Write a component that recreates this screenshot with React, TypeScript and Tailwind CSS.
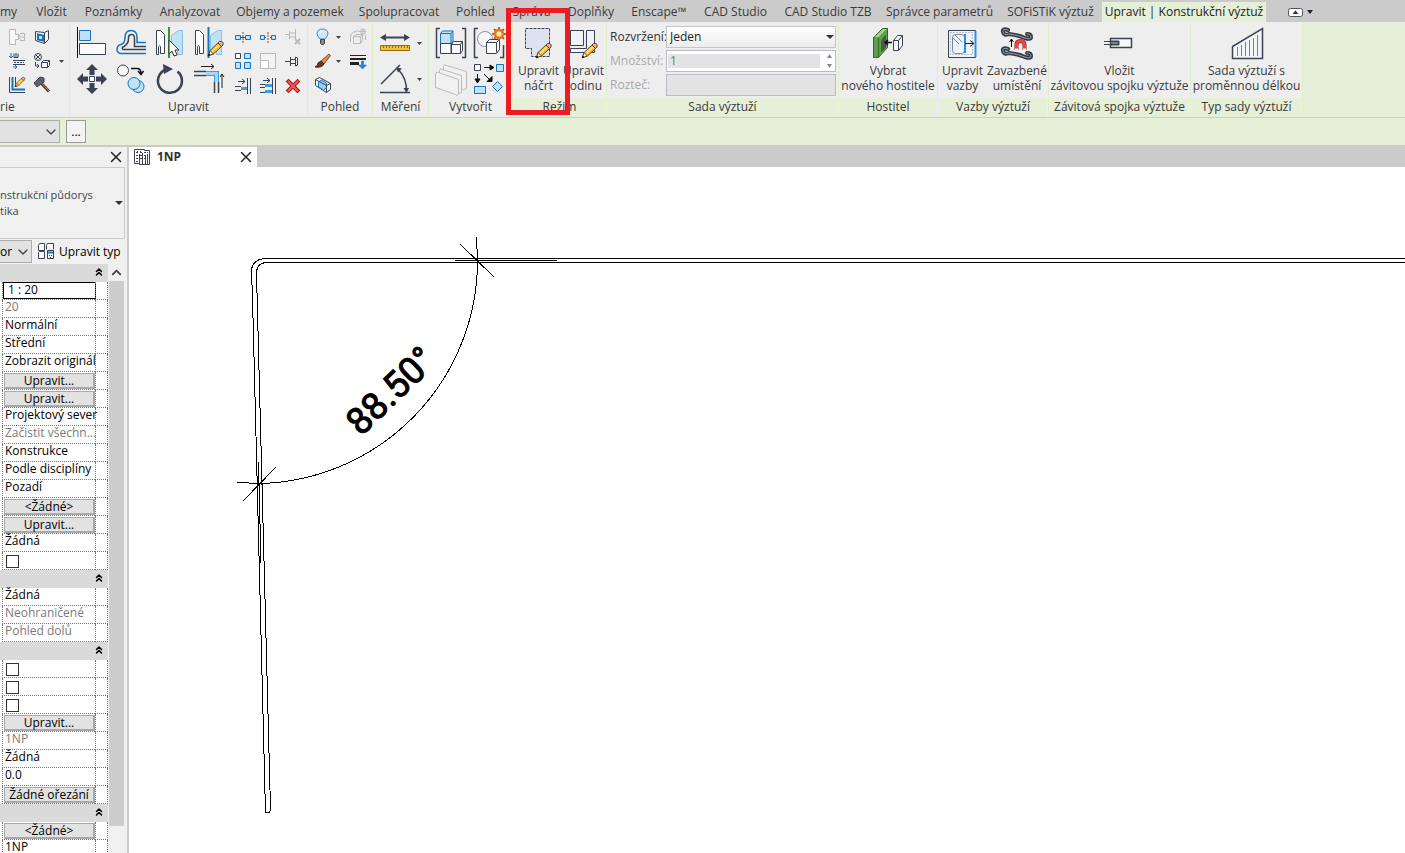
import React from "react";
import { ChevronDown, ChevronUp, ChevronsUp, X } from "lucide-react";

const DARK = "#3b4352";
const BLUE = "#1673c4";
const SKY = "#bfe2f7";
const OFF = "#b9b9b9";

const tabs = [
  { name: "my", width: "w-[27px]" },
  { name: "Vložit", width: "w-[49px]" },
  { name: "Poznámky", width: "w-[75px]" },
  { name: "Analyzovat", width: "w-[78px]" },
  { name: "Objemy a pozemek", width: "w-[122px]" },
  { name: "Spolupracovat", width: "w-[96px]" },
  { name: "Pohled", width: "w-[57px]" },
  { name: "Správa", width: "w-[55px]" },
  { name: "Doplňky", width: "w-[64px]" },
  { name: "Enscape™", width: "w-[72px]" },
  { name: "CAD Studio", width: "w-[81px]" },
  { name: "CAD Studio TZB", width: "w-[104px]" },
  { name: "Správce parametrů", width: "w-[119px]" },
  { name: "SOFiSTiK výztuž", width: "w-[103px]" },
];

type Row = { kind: "text" | "muted" | "edit" | "button" | "check" | "group"; value: string };

const rows: Row[] = [
  { kind: "group", value: "" },
  { kind: "edit", value: "1 : 20" },
  { kind: "muted", value: "20" },
  { kind: "text", value: "Normální" },
  { kind: "text", value: "Střední" },
  { kind: "text", value: "Zobrazit originál" },
  { kind: "button", value: "Upravit..." },
  { kind: "button", value: "Upravit..." },
  { kind: "text", value: "Projektový sever" },
  { kind: "muted", value: "Začistit všechn..." },
  { kind: "text", value: "Konstrukce" },
  { kind: "text", value: "Podle disciplíny" },
  { kind: "text", value: "Pozadí" },
  { kind: "button", value: "<Žádné>" },
  { kind: "button", value: "Upravit..." },
  { kind: "text", value: "Žádná" },
  { kind: "check", value: "" },
  { kind: "group", value: "" },
  { kind: "text", value: "Žádná" },
  { kind: "muted", value: "Neohraničené" },
  { kind: "muted", value: "Pohled dolů" },
  { kind: "group", value: "" },
  { kind: "check", value: "" },
  { kind: "check", value: "" },
  { kind: "check", value: "" },
  { kind: "button", value: "Upravit..." },
  { kind: "muted", value: "1NP" },
  { kind: "text", value: "Žádná" },
  { kind: "text", value: "0.0" },
  { kind: "button", value: "Žádné ořezání" },
  { kind: "group", value: "" },
  { kind: "button", value: "<Žádné>" },
  { kind: "text", value: "1NP" },
];

function Small({ label, children }: { label: string; children: React.ReactNode }) {
  return (
    <button aria-label={label} className="block h-4 w-4 shrink-0">
      <svg width="16" height="16" viewBox="0 0 16 16" fill="none" stroke={DARK} className="overflow-visible">
        {children}
      </svg>
    </button>
  );
}

function Big({ label, children }: { label: string; children: React.ReactNode }) {
  return (
    <button aria-label={label} className="block h-[30px] w-[30px] shrink-0">
      <svg width="30" height="30" viewBox="0 0 30 30" fill="none" stroke={DARK} className="overflow-visible">
        {children}
      </svg>
    </button>
  );
}

function Caret({ label }: { label: string }) {
  return (
    <button aria-label={label} className="flex h-4 w-[5px] shrink-0 items-center">
      <svg width="5" height="3" viewBox="0 0 5 3">
        <path d="M0 0h5L2.500 3z" fill="#444" />
      </svg>
    </button>
  );
}

function Pencil({ x, y }: { x: number; y: number }) {
  return (
    <g transform={`translate(${x} ${y})`} strokeWidth="1">
      <path d="M.5 14.500l1.500-5L10 2l3.500 3.500-8 7.500z" fill="#f7bb2c" stroke="#6b4a14" />
      <path d="M2 9.500L5.500 13l-5 1.500z" fill="#fdf0d8" stroke="#6b4a14" />
      <path d="M10 2l1.500-1.500q2-.5 3 .5t.5 3L13.500 5.500z" fill="#f2b08c" stroke="#4f3a34" />
      <path d="M4 10.500l7-6.500" stroke="#ffe694" strokeWidth="1.500" />
      <path d="M0 15l1-2 1 1z" fill="#222" stroke="#222" />
    </g>
  );
}

type PanelProps = { title: string; width: string; context?: boolean; children: React.ReactNode };

function Panel({ title, width, context, children }: PanelProps) {
  return (
    <section className={`flex shrink-0 flex-col border-r border-[#dff0c8] bg-[#eeeeee] ${width}`}>
      <div className="h-[76px]">{children}</div>
      <h2 className={`mx-px h-[19px] text-center leading-[17px] whitespace-nowrap ${context ? "bg-[#e6efd8]" : ""}`}>
        {title}
      </h2>
    </section>
  );
}

type CommandProps = { lines: [string, string]; children: React.ReactNode };

function Command({ lines, children }: CommandProps) {
  return (
    <button className="flex shrink-0 flex-col items-center leading-[15px] whitespace-nowrap">
      <svg width="32" height="32" viewBox="0 0 32 32" fill="none" stroke={DARK} className="mb-1 overflow-visible">
        {children}
      </svg>
      <span>{lines[0]}</span>
      <span>{lines[1]}</span>
    </button>
  );
}

function GeometryTools() {
  return (
    <div className="flex gap-[9px] pt-[7px] pl-[9px]">
      <div className="flex flex-col gap-2">
        <Small label="Zářez">
          <path d="M.5.500h6v5h3v5h-3v5h-6z" stroke={OFF} fill="#f7f7f7" />
          <path d="M15 8H9m2.500-2.500L9 8l2.500 2.500M11 4.500h4.500v7H11" stroke={OFF} />
        </Small>
        <Small label="Odříznout">
          <path d="M2 0v5M0 3l2 2 2-2M4 14h4l-2-2m2 2l-2 2" stroke={BLUE} />
          <path d="M5 .500v4h4v-4M7 0v4M4 7.500h12M4 11.500h12" />
          <path d="M5 9.500h10" strokeDasharray="2 1" />
        </Small>
        <Small label="Spojení">
          <path d="M.5 0v15.500H16M6.500 0v9.500H8" />
          <path d="M3.500 0v12.500H16" stroke={BLUE} strokeWidth="2" />
          <g transform="translate(6 0) scale(.65)"><Pencil x={0} y={0} /></g>
        </Small>
      </div>
      <div className="flex flex-col gap-2">
        <Small label="Spojit geometrii">
          <path d="M1.500 2.500l9 1 4-2v9l-4 4-9-3z" fill="#f5f7fa" />
          <path d="M10.500 3.500v11" />
          <path d="M4 5.500l5 1v5l-5-1z" fill={SKY} stroke={BLUE} strokeWidth="2" />
        </Small>
        <Small label="Barva">
          <circle cx="4" cy="4" r="3.500" />
          <path d="M1.500 1.500l5 5m0-5l-5 5M1.500 9v4h3m-1.500-2l2 2-2 2" />
          <path d="M7.500 9.500l2-2h6v5l-2 2h-6zM7.500 9.500h6v5m0-5l2-2" fill="#fff" />
        </Small>
        <Small label="Demolice">
          <path d="M0 6l6-6 4 1v4l-3 2-4 3z" fill="#596273" />
          <path d="M7 6l8 8.500" stroke="#5b3529" strokeWidth="3" />
          <path d="M7 5.500l8 8.500" stroke="#c08a72" />
        </Small>
      </div>
      <div className="flex h-16 items-center">
        <Caret label="Další geometrie" />
      </div>
    </div>
  );
}

function ModifyTools() {
  return (
    <div className="flex pt-[5px] pl-[7px]">
      <div className="grid grid-cols-4 gap-x-[9px] gap-y-[7px]">
        <Big label="Zarovnat">
          <path d="M.5 0v31" stroke="#111" />
          <path d="M2.500 3.500h11v10h-11z" fill={SKY} stroke={BLUE} />
          <path d="M2.500 16.500h26v11h-26z" fill="#fbfbfb" />
        </Big>
        <Big label="Odsadit">
          <path d="M30 26.500H5q-4-.5-4-4 0-4 4-5 4-1 4-7 0-7 6-7t6 7v5h9" stroke={BLUE} strokeWidth="1.500" />
          <path d="M30 22.500H7q-2-2 1-3 5-3 4.500-9 0-3 3-3t3 4v8H30" strokeWidth="1.500" />
        </Big>
        <Big label="Zrcadlit - vybrat osu">
          <path d="M1.500 3.500h4l4 4v19h-4v-7q-1-2-2 0v8h-2z" fill="#fff" />
          <path d="M27.500 3.500h-4l-7 5v17h4v-4q1-2 2 0v6h5z" fill={SKY} stroke="#8cbfe0" />
          <path d="M14 0v31" stroke="#35952f" strokeWidth="2" />
          <path d="M14 13v14l3-3 2 5 3-1-2-5h4z" fill="#fff" stroke="#333" />
        </Big>
        <Big label="Zrcadlit - nakreslit osu">
          <path d="M1.500 3.500h4l4 4v19h-4v-7q-1-2-2 0v8h-2z" fill="#fff" />
          <path d="M27.500 3.500h-4l-7 5v17h4v-4q1-2 2 0v6h5z" fill={SKY} stroke="#8cbfe0" />
          <path d="M14.500 0v31" stroke={BLUE} strokeWidth="2" />
          <Pencil x={14} y={14} />
        </Big>
        <Big label="Přesunout">
          <g fill={DARK} stroke="none">
            <path d="M15 0l6 6h-3.500v5h-5V6H9zM15 30l6-6h-3.500v-5h-5v5H9zM0 15l6-6v3.500h5v5H6V21zM30 15l-6-6v3.500h-5v5h5V21z" />
          </g>
          <path d="M12.500 12.500h5v5h-5z" fill="#fff" />
        </Big>
        <Big label="Kopírovat">
          <circle cx="7" cy="6.500" r="5.500" fill="#fafafa" />
          <circle cx="22" cy="22.500" r="6" fill={SKY} stroke={BLUE} />
          <circle cx="18" cy="19.500" r="6" fill={SKY} stroke={BLUE} />
          <path d="M15 4.500h6q4 0 4 5M22 7l3 3.500L27.500 7" stroke="#111" strokeWidth="1.500" />
        </Big>
        <Big label="Otočit">
          <path d="M23.500 6.500A12 12 0 1 1 12 4.500" strokeWidth="2.500" transform="translate(-1 1)" />
          <path d="M8 0l10 5-9 5z" fill={DARK} stroke="none" />
        </Big>
        <Big label="Oříznout">
          <path d="M0 7.500h12M0 11.500h12M20.500 18v11M24.500 18v11" strokeWidth="1.500" />
          <path d="M12 9.500h10.500V18" stroke="#3d9be9" strokeWidth="5" />
          <path d="M12 9.500h10.500V18" stroke="#a6d5fb" strokeWidth="3" />
          <path d="M7 2.500h13M17 0l3 2.500L17 5M28 24V10m-2 3l2-3 2 3" stroke="#222" />
        </Big>
      </div>
      <div className="ml-[11px] grid grid-cols-3 gap-x-[9px] gap-y-2 pt-[2px]">
        <Small label="Rozdělit prvek">
          <path d="M.5 6.500h5v4h-5zM10.500 6.500h5v4h-5z" fill={SKY} stroke={BLUE} />
          <path d="M8 3v11" stroke="#c02a1d" strokeDasharray="2 1" />
          <path d="M5.500 8.500h5" stroke="#c02a1d" />
        </Small>
        <Small label="Rozdělit s mezerou">
          <path d="M.5 6.500h4v4h-4zM11.500 6.500h4v4h-4z" fill={SKY} stroke={BLUE} />
          <path d="M8 3v11" stroke="#c02a1d" strokeDasharray="2 1" />
          <path d="M4 8.500h2m4 0h2" stroke="#c02a1d" />
        </Small>
        <Small label="Uvolnit">
          <path d="M0 5.500h4M4.500 2v8M5 4h5m-5 4h5M10.500 0v11" stroke={OFF} />
          <path d="M10 10l5 5m0-5l-5 5" stroke={OFF} strokeWidth="2" />
        </Small>
        <Small label="Pole">
          <path d="M.5.500h5v5h-5z" fill="#fff" />
          <path d="M9.500.500h6v5h-6zM.5 9.500h5v6h-5zM9.500 9.500h6v6h-6z" fill={SKY} stroke={BLUE} />
        </Small>
        <Small label="Měřítko">
          <path d="M.5.500h15v15H.500z" stroke={OFF} fill="#f3f3f3" />
          <path d="M.5 7.500h8v8h-8z" stroke={OFF} fill="#fff" />
        </Small>
        <Small label="Připnout">
          <path d="M0 8.500h5M5.500 4v9M6 6.500h4m-4 4h4M10.500 4l2 1v7l-2 1z" />
        </Small>
        <Small label="Oříznout jeden prvek">
          <path d="M3 3.500h7M7 1l3 2.500L7 6M0 8.500h6M0 12.500h6M12.500 0v16M15.500 0v16" />
          <path d="M6 10.500h6" stroke="#3d9be9" strokeWidth="3" />
        </Small>
        <Small label="Oříznout více prvků">
          <path d="M3 2.500h7M7 0l3 2.500L7 5M0 6.500h5M0 9.500h5M0 14.500h5M12.500 0v16M15.500 0v16" />
          <path d="M5 7.500h7M5 13.500h7" stroke="#3d9be9" strokeWidth="3" />
        </Small>
        <Small label="Odstranit">
          <path d="M3.500 3.500l9 9m0-9l-9 9" stroke="#a8171b" strokeWidth="4" strokeLinecap="square" />
          <path d="M3.500 3.500l9 9m0-9l-9 9" stroke="#f25555" strokeWidth="2" strokeLinecap="square" />
        </Small>
      </div>
    </div>
  );
}

function ViewTools() {
  return (
    <div className="flex pt-[7px] pl-[7px]">
      <div className="flex flex-col gap-2">
        <Small label="Skrýt">
          <path d="M5 10q-3-3-3-5.500Q2.500 0 7.500 0T13 4.500Q13 7 10 10z" fill="#cfe8fb" stroke="#3c86c5" />
          <path d="M5.500 10.500h4v4l-1 1h-2l-1-1z" fill="#888" stroke="#444" />
          <path d="M5 4q0-2 2-2" stroke="#fff" />
        </Small>
        <Small label="Přepsat grafiku">
          <path d="M6 8l8-7 1.500 1.500L9 11z" fill="#e08b4d" stroke="#8d4a1e" />
          <path d="M0 14q3-1 3-4l3-2 3 3q-2 4-9 3z" fill="#6a3b22" stroke="#3f2414" />
        </Small>
        <Small label="Rámeček výběru">
          <path d="M.5 2.500l4-2 11 6v6l-4 3-11-7z" fill="#f4f6f8" />
          <path d="M3.500 5l3-2 5 3v5l-3 2-5-3z" fill="#9bd0fa" stroke={BLUE} />
          <path d="M.5 2.500l11 6v7m0-7l4-2" />
        </Small>
      </div>
      <div className="mr-[9px] ml-[5px] flex flex-col gap-2">
        <Caret label="Možnosti skrytí" />
        <Caret label="Možnosti grafiky" />
      </div>
      <div className="flex flex-col gap-2">
        <Small label="Posunout">
          <path d="M3.500 7.500h7v7h-7zM3.500 7.500l2-2h7v6l-2 3m0-7l2-2M.5 13V6l4-4M4 3.500q4-3 6-1" stroke={OFF} />
          <circle cx="13" cy="2.500" r="2.500" stroke={OFF} />
          <path d="M13 0v5m-2.500-2.500h5M15.500 6v5" stroke={OFF} />
        </Small>
        <Small label="Síla čar">
          <path d="M0 2.500h16" stroke="#222" />
          <path d="M0 6h16" stroke="#222" strokeWidth="2" />
          <path d="M0 10.500h9" stroke="#222" strokeWidth="3" />
          <path d="M11.500 8h2v4h3L12.500 16l-4-4h3z" fill="#2a86dc" stroke="#1460a8" strokeWidth=".5" />
        </Small>
      </div>
    </div>
  );
}

function MeasureTools() {
  return (
    <div className="flex gap-[7px] pt-[5px] pl-[7px]">
      <div className="flex flex-col gap-[7px]">
        <Big label="Kóta">
          <path d="M2 10.500h26" strokeWidth="2" />
          <path d="M0 10.500L6 7v7zM30 10.500L24 7v7z" fill={DARK} stroke="none" />
          <path d="M.5 18.500h29v5H.500z" fill="#efc23a" stroke="#9a6b16" />
          <path d="M3.500 19v2m3-2v2m3-2v2m3-2v2m3-2v2m3-2v2m3-2v2m3-2v2m3-2v2" stroke="#9a6b16" />
        </Big>
        <Big label="Úhlová kóta">
          <path d="M0 28.500h30M1 20L20 1" strokeWidth="1.500" />
          <path d="M18 5q9 10 8.500 22" strokeWidth="1.500" />
          <path d="M16 3.500l6 1-4 4zM26.500 29l-3-5h5.500z" fill={DARK} stroke="none" />
        </Big>
      </div>
      <div className="flex flex-col gap-5 pt-[8px]">
        <Caret label="Druhy kót" />
        <Caret label="Druhy úhlových kót" />
      </div>
    </div>
  );
}

function CreateTools() {
  return (
    <div className="grid grid-cols-[30px_30px] gap-x-2 gap-y-[7px] pt-[5px] pl-[7px]">
      <Big label="Vytvořit skupinu">
        <path d="M4 1.500H.500v29H4M26 1.500h3.500v29H26" strokeWidth="1.500" />
        <path d="M4.500 6.500l2-2.500H17v10l-2 3H4.500z" fill={SKY} stroke={BLUE} />
        <path d="M4.500 6.500H15v10m0-10l2-2.500" stroke={BLUE} />
        <path d="M4.500 16.500H15v10H4.500zM15.500 17.500l2-3h9v9l-2 3h-9z" fill="#fafafa" />
        <path d="M15.500 17.500h9v9m0-9l2-3" />
      </Big>
      <Big label="Vytvořit podobné">
        <path d="M4 1.500H.500v29H4M26 30.500h3.500V18" strokeWidth="1.500" />
        <circle cx="11" cy="12" r="7.500" fill="#f5f7fa" stroke="#8a93a0" />
        <path d="M12.500 15.500l3-3h10v10l-3 4h-10zM12.500 15.500h10v10m0-10l3-3" fill="#fafafa" />
        <path d="M25 0l1.500 3.500L30 2l-1.500 3.500L32 7l-3.500 1.500L30 12l-3.500-1.500L25 14l-1.500-3.500L20 12l1.500-3.500L18 7l3.500-1.500L20 2l3.500 1.500z" fill="#f08c28" stroke="#b5521b" />
        <circle cx="25" cy="7" r="2.500" fill="#fff2a8" stroke="none" />
      </Big>
      <Big label="Vytvořit sestavu">
        <g fill="#f1f1f1" stroke={OFF}>
          <path d="M7.500 2.500q1-3 3-1l20 6v17l-3 1-20-7z" />
          <path d="M3.500 6.500q1-3 3-1l19 6v17l-3 1-19-7z" />
          <path d="M-.5 9.500q1-2 3-1l20 7v14q0 3-3 1l-20-7z" />
        </g>
      </Big>
      <Big label="Vytvořit díly">
        <path d="M.5.500h6v6h-6z" fill="#fff" />
        <path d="M22.500.500h7v7h-7zM.5 22.500h11v7H.500zM23.500 17.500l5 5-5 5-5-5z" fill={SKY} stroke={BLUE} />
        <path d="M10 3.500h9M16 1l4 2.500L16 6zM3.500 10v8M1 15l2.500 4L6 15zM10 10l7 7M18 12.500v5h-5z" stroke="#111" fill="#111" />
      </Big>
    </div>
  );
}

function SetForm() {
  return (
    <form className="grid grid-cols-[56px_minmax(0,1fr)] items-center gap-y-[2px] pt-[4px] pr-[2px] pl-[3px]">
      <label htmlFor="layout" className="text-[#333]">Rozvržení:</label>
      <div className="relative">
        <select
          id="layout"
          defaultValue="Jeden"
          className="block h-[22px] w-full appearance-none border border-[#c3c5cc] bg-linear-to-b from-white to-[#ececec] pl-[3px] text-[#222]"
        >
          <option>Jeden</option>
        </select>
        <svg width="8" height="4" viewBox="0 0 8 4" className="pointer-events-none absolute top-[9px] right-[2px]">
          <path d="M0 0h8L4 4z" fill="#333" />
        </svg>
      </div>
      <label htmlFor="amount" className="text-[#a9a9a9]">Množství:</label>
      <div className="flex h-[22px] items-center border border-[#b9bcc8] bg-white">
        <input
          id="amount"
          defaultValue="1"
          disabled
          className="mr-[7px] ml-[1px] h-[14px] min-w-0 flex-1 bg-[#e3e3e3] pl-[2px] text-[#777]"
        />
        <div className="mr-[3px] flex flex-col gap-[6px]">
          <svg width="5" height="4" viewBox="0 0 5 4"><path d="M0 4h5L2.500 0z" fill="#888" /></svg>
          <svg width="5" height="4" viewBox="0 0 5 4"><path d="M0 0h5L2.500 4z" fill="#888" /></svg>
        </div>
      </div>
      <label htmlFor="spacing" className="text-[#a9a9a9]">Rozteč:</label>
      <input id="spacing" disabled className="h-[22px] w-full min-w-0 border border-[#b9bcc8] bg-[#e3e3e3]" />
    </form>
  );
}

function Ribbon() {
  return (
    <header className="relative shrink-0 bg-[#e6efd8] text-[#3a3a3a]">
      <nav className="flex h-[22px] items-end overflow-hidden bg-[#cbcbcb] leading-5">
        {tabs.map((tab) => (
          <a
            key={tab.name}
            href="#"
            className={`flex h-5 shrink-0 justify-center whitespace-nowrap ${tab.name === "my" ? "pr-[10px]" : ""} ${tab.width}`}
          >
            {tab.name}
          </a>
        ))}
        <a href="#" className="flex h-5 w-[164px] shrink-0 justify-center bg-[#e6efd8] whitespace-nowrap text-[#1c1c1c]">
          Upravit | Konstrukční výztuž
        </a>
        <button aria-label="Minimalizovat pás karet" className="ml-[22px] flex h-5 items-center gap-1">
          <svg width="15" height="9" viewBox="0 0 15 9">
            <rect x=".5" y=".5" width="14" height="8" rx="2" fill="#fff" stroke="#4b5566" />
            <path d="M4.500 6h6l-3-3.500z" fill="#333" />
          </svg>
          <svg width="6" height="4" viewBox="0 0 6 4"><path d="M0 0h6L3 4z" fill="#222" /></svg>
        </button>
      </nav>
      <div className="flex h-[95px] overflow-hidden">
        <Panel title="" width="w-[70px]">
          <div className="flex h-full flex-col">
            <GeometryTools />
            <span className="mt-[5px] leading-[17px] whitespace-nowrap">rie</span>
          </div>
        </Panel>
        <Panel title="Upravit" width="w-[238px]"><ModifyTools /></Panel>
        <Panel title="Pohled" width="w-[65px]"><ViewTools /></Panel>
        <Panel title="Měření" width="w-[56px]"><MeasureTools /></Panel>
        <Panel title="Vytvořit" width="w-[84px]"><CreateTools /></Panel>
        <Panel title="Režim" width="w-[94px]" context>
          <div className="flex gap-1 pt-[5px] pl-[5px]">
            <Command lines={["Upravit", "náčrt"]}>
              <path d="M3.500 1.500h24v28h-18v-8h-6z" fill="#dde3ee" strokeDasharray="3 1" />
              <Pencil x={14} y={16} />
            </Command>
            <Command lines={["Upravit", "rodinu"]}>
              <path d="M3.500 3.500h13v15h-13zM19.500 3.500h8v22h-24v-4h16z" fill="#f1f3f6" />
              <Pencil x={15} y={16} />
            </Command>
          </div>
        </Panel>
        <Panel title="Sada výztuží" width="w-[232px]" context><SetForm /></Panel>
        <Panel title="Hostitel" width="w-[99px]" context>
          <div className="flex justify-center pt-[5px]">
            <Command lines={["Vybrat", "nového hostitele"]}>
              <path d="M1.500 10.500l9-9h5v19l-9 10h-5z" fill="#5fa04c" stroke="#2f6b25" />
              <path d="M1.500 10.500h5l9-9M6.500 10.500v20" stroke="#2f6b25" />
              <path d="M2 10.500l9-8.500h4l-8.500 8.500z" fill="#a4d48f" stroke="none" />
              <path d="M9.500 13.500l4-5v12l-4 4z" fill="#4a5a4a" stroke="#2f6b25" />
              <path d="M20 15.500h-7m3-2.500l-3 2.500 3 2.500" stroke="#111" strokeWidth="1.500" />
              <path d="M21.500 13.500l4-5h5v10l-4 5h-5zM21.500 13.500h5l4-5m-4 5v10" fill="#f7f8fa" />
            </Command>
          </div>
        </Panel>
        <Panel title="Vazby výztuží" width="w-[111px]" context>
          <div className="flex gap-1 pt-[5px] pl-1">
            <Command lines={["Upravit", "vazby"]}>
              <path d="M2.500 3.500h27v27h-27z" fill="#eef3f9" />
              <path d="M4.500 5.500h22v22h-22z" strokeDasharray="1 2" stroke="#8391a5" />
              <rect x="6.500" y="7.500" width="12" height="19" rx="3" stroke="#7d8797" />
              <path d="M9 8l7 7M7 11l6 6" stroke="#7d8797" />
              <path d="M19 7v19M29.500 4v26" stroke="#2b8ff0" strokeWidth="2" />
              <path d="M19 16.500h8M24 13.500l4 3-4 3" stroke="#222" />
            </Command>
            <Command lines={["Zavazbené", "umístění"]}>
              <g strokeLinecap="round">
                <path d="M7 3Q1 1 2 5t6 2q9 1 16 4 6 2 6-1t-4-3M7 22q-6-2-5 2t6 2q9 1 16 4 6 2 6-1t-4-3" strokeWidth="4" stroke="#323842" />
                <path d="M7 3Q1 1 2 5t6 2q9 1 16 4 6 2 6-1t-4-3M7 22q-6-2-5 2t6 2q9 1 16 4 6 2 6-1t-4-3" stroke="#9aa3ad" />
              </g>
              <path d="M10.500 20v-8m-2 3l2-3 2 3" stroke="#111" />
              <path d="M15.500 23v-5q0-4 4-4t4 4v5" stroke="#8f1f1f" strokeWidth="4" />
              <path d="M15.500 22v-4q0-4 4-4t4 4v4" stroke="#ef4343" strokeWidth="3" />
              <path d="M14 23h3m5 0h3" stroke="#eee" strokeWidth="3" />
            </Command>
          </div>
        </Panel>
        <Panel title="Závitová spojka výztuže" width="w-[142px]" context>
          <div className="flex justify-center pt-[5px]">
            <Command lines={["Vložit", "závitovou spojku výztuže"]}>
              <path d="M1 14.500h7M1 17.500h7" />
              <path d="M7.500 11.500h21v9h-21z" fill="#f7f7f7" strokeWidth="1.500" />
              <path d="M8 14h8v4H8z" fill="#3b4352" />
              <path d="M8 16.500l1-1 1 1 1-1 1 1 1-1 1 1 1-1" stroke="#ccc" />
            </Command>
          </div>
        </Panel>
        <Panel title="Typ sady výztuží" width="w-[112px]" context>
          <div className="flex justify-center pt-[5px]">
            <Command lines={["Sada výztuží s", "proměnnou délkou"]}>
              <path d="M1.500 31.500v-12l30-18v30z" fill="#f3f4f6" strokeWidth="1.500" />
              <path d="M6.500 20v9m4-11v11m4-14v14m4-16v16m4-18v18m4-21v21" stroke="#3b93e6" />
            </Command>
          </div>
        </Panel>
      </div>
      <div className="flex h-[30px] gap-[6px] border-t border-b-2 border-t-[#cccccc] border-b-[#cbcbcb] pt-[2px]">
        <div className="relative h-[23px] w-[60px]">
          <select aria-label="Možnosti" className="h-full w-full appearance-none border border-l-0 border-[#adadad] bg-[#e2e2e2]" />
          <ChevronDown className="pointer-events-none absolute top-[4px] right-[1px] h-4 w-4 text-[#444]" strokeWidth={2} />
        </div>
        <button className="h-[23px] w-5 border border-[#9a9a9a] bg-[#f3f3f3] leading-4 text-black">...</button>
      </div>
      <div className="pointer-events-none absolute top-2 left-[506px] h-[107px] w-16 border-[5px] border-[#ed1c24]" />
    </header>
  );
}

function PropertyValue({ row }: { row: Row }) {
  if (row.kind === "check") {
    return (
      <input
        type="checkbox"
        aria-label="Hodnota"
        className="mt-[3px] ml-[3px] block h-[13px] w-[13px] appearance-none border border-[#333] bg-white"
      />
    );
  }
  if (row.kind === "button") {
    return (
      <button className="mt-px ml-px block h-4 w-[91px] border border-[#a9a9a9] border-r-2 border-b-2 bg-[#e2e2e2] text-center leading-[13px] whitespace-nowrap">
        {row.value}
      </button>
    );
  }
  if (row.kind === "edit") {
    return (
      <input
        aria-label="Měřítko pohledu"
        defaultValue={row.value}
        className="block h-[17px] w-[93px] border border-black bg-white pb-px pl-1"
      />
    );
  }
  return (
    <span className={`block pt-px pl-[2px] leading-3 whitespace-nowrap ${row.kind === "muted" ? "text-[#7a7a7a]" : ""}`}>
      {row.value}
    </span>
  );
}

function Properties() {
  return (
    <aside className="flex w-[129px] shrink-0 flex-col overflow-hidden border-r-2 border-[#cbcbcb] bg-[#f0f0f0] text-black">
      <div className="flex h-5 shrink-0 items-center justify-end pr-[2px]">
        <button aria-label="Zavřít vlastnosti">
          <X className="h-[18px] w-[18px] text-[#222]" strokeWidth={2} />
        </button>
      </div>
      <div className="mr-[2px] flex h-[72px] shrink-0 items-center justify-between border border-l-0 border-[#cbcbcb] pr-px">
        <p className="text-[11px] leading-4 whitespace-nowrap text-[#444]">
          nstrukční půdorys
          <br />
          tika
        </p>
        <svg width="8" height="4" viewBox="0 0 8 4"><path d="M0 0h8L4 4z" fill="#333" /></svg>
      </div>
      <div className="flex h-[25px] shrink-0 items-center gap-[6px]">
        <div className="relative h-[23px] w-8">
          <select aria-label="Typ" className="h-full w-full appearance-none border border-l-0 border-[#adadad] bg-[#e2e2e2]">
            <option>or</option>
          </select>
          <ChevronDown className="pointer-events-none absolute top-[4px] right-[1px] h-4 w-4 text-[#444]" strokeWidth={2} />
        </div>
        <button className="flex items-center gap-[5px] whitespace-nowrap">
          <svg width="16" height="17" viewBox="0 0 16 17" fill="none" stroke={DARK}>
            <path d="M.5 2.500l1-2h5v7h-6zM8.500 2.500l1-2h6v6M8.500 2.500v4M.5 9.500l1-1h5v7h-6z" fill="#fff" />
            <path d="M9.500 7.500h6v8h-6z" fill="#fff" />
            <path d="M10 9.500h5" stroke={BLUE} strokeWidth="2" />
            <path d="M11 12.500h1m1 0h1M12 14.500h1" />
          </svg>
          Upravit typ
        </button>
      </div>
      <div className="flex min-h-0 flex-1 overflow-hidden">
        <table className="w-[108px] table-fixed border-separate border-spacing-0 self-start bg-white">
          <colgroup>
            <col className="w-[2px]" />
            <col className="w-[93px]" />
            <col className="w-[13px]" />
          </colgroup>
          <tbody>
            {rows.map((row, index) =>
              row.kind === "group" ? (
                <tr key={index} className="h-[18px] bg-[#dadada]">
                  <td colSpan={3} className="p-0 align-top">
                    <button aria-label="Sbalit skupinu" className="mt-[2px] mr-[3px] ml-auto block">
                      <ChevronsUp className="h-3 w-3" strokeWidth={3} />
                    </button>
                  </td>
                </tr>
              ) : (
                <tr key={index} className="h-[18px]">
                  <td className="p-0" />
                  <td className="h-[18px] border-b border-l border-dotted border-[#777] p-0 align-top">
                    <PropertyValue row={row} />
                  </td>
                  <td className="border-r border-b border-l border-dotted border-[#777] p-0" />
                </tr>
              ),
            )}
          </tbody>
        </table>
        <div className="ml-px flex w-[15px] flex-col bg-[#f0f0f0]">
          <div className="flex h-[17px] shrink-0 items-center justify-center">
            <ChevronUp className="h-[15px] w-[15px] text-[#444]" strokeWidth={3} />
          </div>
          <div className="mb-[27px] flex-1 bg-[#cdcdcd]" />
        </div>
      </div>
    </aside>
  );
}

function Drawing() {
  return (
    <svg className="min-h-0 w-full flex-1 bg-white" fill="none" stroke="#000">
      <g transform="translate(-129 -167)" shapeRendering="crispEdges">
        {/* ohyb výztuže */}
        <path d="M4000 258.500H264.500Q251.500 260 251.500 271.500L252.500 297.500L265.500 812.500H269.500L270.500 809L256.500 273.500Q256.500 263 266.500 262.500H4000" />
        <path d="M455 260.500H557M258.500 462L261 563" />
        {/* oblouk kóty */}
        <path d="M476.500 237L477.500 261A223 223 0 0 1 260 483.500L237 482.500" />
        <path d="M460 244l34 33M243 501l33-34" />
      </g>
      <text
        x="0"
        y="0"
        transform="translate(232 270) rotate(-44)"
        fill="#000"
        strokeWidth="1"
        className="font-['Roboto',sans-serif] text-[37px]"
      >
        88.50°
      </text>
    </svg>
  );
}

export default function App() {
  return (
    <div className="flex h-screen flex-col overflow-hidden bg-white font-['Open_Sans','Noto_Sans',sans-serif] text-[12px]">
      <Ribbon />
      <div className="flex min-h-0 flex-1">
        <Properties />
        <main className="flex min-w-0 flex-1 flex-col">
          <div className="flex h-5 shrink-0 bg-[#cbcbcb]">
            <div className="flex w-32 items-center bg-white pr-[2px] pl-[5px] text-[#333]">
              <svg width="16" height="16" viewBox="0 0 16 16" fill="none" stroke={DARK}>
                <path d="M.5.500h10v1h5v14h-10v-1h-5z" fill="#fff" />
                <path d="M2 3.500h3m1 0h3m1 0h4M2 6.500h3m1 0h3m1 0h4M2 9.500h3m1 0h3m1 0h4M2 12.500h3" strokeDasharray="2 1" />
                <path d="M5.500 5v10M8.500 4v11M11.500 6v9M13.500 5v10M3.500 2v1M6.500 2v1" />
              </svg>
              <a href="#" className="ml-[7px] flex-1 font-bold">1NP</a>
              <button aria-label="Zavřít pohled">
                <X className="h-[18px] w-[18px] text-[#222]" strokeWidth={2} />
              </button>
            </div>
          </div>
          <Drawing />
        </main>
      </div>
    </div>
  );
}
